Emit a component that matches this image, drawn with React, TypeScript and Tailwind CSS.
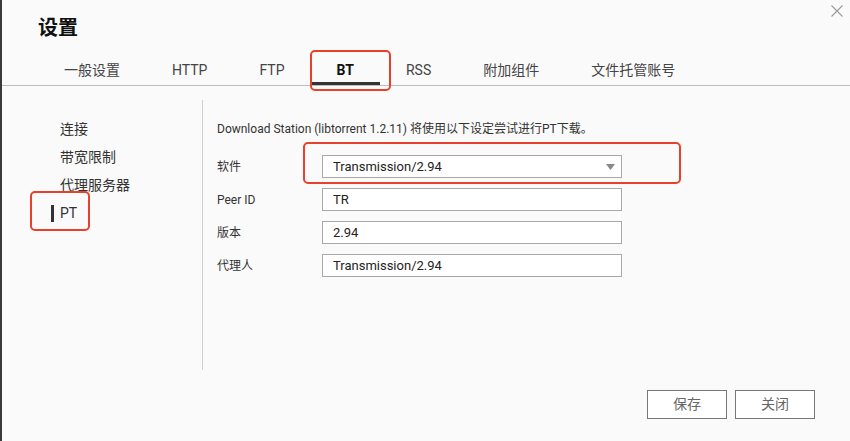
import React from "react";

const tabs = ["一般设置", "HTTP", "FTP", "BT", "RSS", "附加组件", "文件托管账号"];
const side = ["连接", "带宽限制", "代理服务器", "PT"];

function Field({ label, value, select, mark }: { label: string; value: string; select?: boolean; mark?: boolean }) {
  return (
    <div className="flex items-center h-[23px]">
      <div className="w-[105px] text-[12px] text-[#333]">{label}</div>
      <div className="relative w-[300px] h-[23px]">
        <div className="w-full h-full border border-[#a8a8a8] bg-white flex items-center pl-[10px] pr-[6px] text-[13px] text-[#222]">
          <span className="flex-1">{value}</span>
          {select && (
            <svg width="9" height="6" viewBox="0 0 9 6">
              <path d="M0 0 H9 L4.5 6 Z" fill="#888" />
            </svg>
          )}
        </div>
        {mark && (
          <div className="absolute left-[-19px] top-[-13px] right-[-59px] bottom-[-6px] border-2 border-[#e8412b] rounded-[5px]" />
        )}
      </div>
    </div>
  );
}

export default function App() {
  return (
    <div className="relative w-[850px] h-[441px] bg-[#fafafa] border-l-2 border-[#3a3a3a] flex flex-col font-['Roboto','Noto_Sans_CJK_SC',sans-serif] overflow-hidden">
      <svg width="12" height="12" viewBox="0 0 12 12" className="absolute top-[5px] right-[7px]">
        <path d="M0.5 0.5 L11.5 11.5 M11.5 0.5 L0.5 11.5" stroke="#9a9a9a" strokeWidth="1.1" />
      </svg>
      <div className="pt-[14px] pl-[36px] h-[50px]">
        <h1 className="text-[20px] leading-[28px] font-bold text-[#111]">设置</h1>
      </div>
      <div className="flex pl-[36px] border-b border-[#bdbdbd] h-[36px]">
        {tabs.map((t) => {
          const active = t === "BT";
          return (
            <div
              key={t}
              className={
                active
                  ? "relative px-[26px] pt-[10px] pb-[2px] border-b-[3px] border-[#333] text-[14px] leading-[20px] font-bold text-[#111]"
                  : "relative px-[26px] pt-[10px] pb-[2px] border-b-[3px] border-transparent text-[14px] leading-[20px] text-[#444]"
              }
            >
              {t}
              {active && (
                <div className="absolute left-[-1px] right-[-11px] top-0 bottom-[-9px] border-2 border-[#e8412b] rounded-[5px]" />
              )}
            </div>
          );
        })}
      </div>
      <div className="flex mt-[14px] h-[270px]">
        <div className="w-[201px] border-r border-[#cfcfcf] pt-[15px]">
          {side.map((s) => (
            <div key={s} className="relative h-[28px] flex items-center pl-[58px] text-[14px] text-[#333]">
              {s === "PT" && (
                <>
                  <div className="absolute left-[49px] top-[6px] w-[3px] h-[17px] bg-[#333]" />
                  <div className="absolute left-[28px] top-[-8px] w-[60px] h-[40px] border-2 border-[#e8412b] rounded-[5px]" />
                </>
              )}
              {s}
            </div>
          ))}
        </div>
        <div className="pl-[14px] pt-[19px] flex flex-col">
          <div className="text-[12px] leading-[20px] text-[#333]">
            Download Station (libtorrent 1.2.11) 将使用以下设定尝试进行PT下载。
          </div>
          <div className="mt-[16px] flex flex-col gap-[10px]">
            <Field label="软件" value="Transmission/2.94" select mark />
            <Field label="Peer ID" value="TR" />
            <Field label="版本" value="2.94" />
            <Field label="代理人" value="Transmission/2.94" />
          </div>
        </div>
      </div>
      <div className="flex justify-end gap-[8px] pr-[35px] mt-[20px]">
        <button className="w-[80px] h-[29px] border border-[#777] bg-white text-[14px] text-[#666]">保存</button>
        <button className="w-[80px] h-[29px] border border-[#777] bg-white text-[14px] text-[#666]">关闭</button>
      </div>
    </div>
  );
}
